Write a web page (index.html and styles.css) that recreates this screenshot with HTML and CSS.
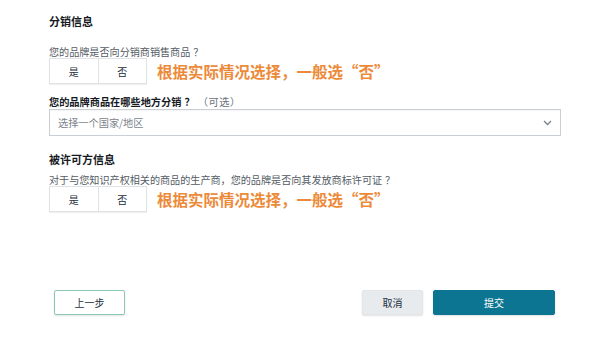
FILE: index.html
```html
<!DOCTYPE html>
<html lang="zh-CN">
<head>
<meta charset="utf-8">
<link rel="stylesheet" href="styles.css">
</head>
<body>
<div class="page">
  <section class="section">
    <h2 class="title">分销信息</h2>
    <p class="question">您的品牌是否向分销商销售商品<span class="punct">？</span></p>
    <div class="choice-row">
      <div class="toggle">
        <span class="opt">是</span>
        <span class="opt">否</span>
      </div>
      <span class="hint">根据实际情况选择，一般选“否”</span>
    </div>
    <p class="label"><b>您的品牌商品在哪些地方分销<span class="punct">？</span></b><span class="optional">（可选）</span></p>
    <div class="select">
      <span class="placeholder">选择一个国家/地区</span>
      <svg class="chev" width="9" height="6" viewBox="0 0 9 6"><path d="M1 1 L4.5 4.5 L8 1" fill="none" stroke="#79828b" stroke-width="1.3"/></svg>
    </div>
  </section>
  <section class="section second">
    <h2 class="title">被许可方信息</h2>
    <p class="question q2">对于与您知识产权相关的商品的生产商，您的品牌是否向其发放商标许可证<span class="punct">？</span></p>
    <div class="choice-row">
      <div class="toggle">
        <span class="opt">是</span>
        <span class="opt">否</span>
      </div>
      <span class="hint">根据实际情况选择，一般选“否”</span>
    </div>
  </section>
  <footer class="footer">
    <button class="btn back">上一步</button>
    <div class="actions">
      <button class="btn cancel">取消</button>
      <button class="btn submit">提交</button>
    </div>
  </footer>
</div>
</body>
</html>
```

FILE: styles.css
```css
* { box-sizing: border-box; }
html, body {
  margin: 0;
  padding: 0;
  background: #ffffff;
}
body {
  font-family: "Noto Sans CJK SC", "Noto Sans", sans-serif;
  color: #16191f;
  width: 612px;
  height: 337px;
  overflow: hidden;
}
.page {
  padding: 14px 0 0 49px;
}
.title {
  margin: 0;
  font-size: 11px;
  line-height: 14px;
  font-weight: 700;
  color: #16191f;
}
.question {
  margin: 17px 0 0 0;
  font-size: 10.1px;
  line-height: 13px;
  color: #545b64;
}
.punct {
  display: inline-block;
  padding-left: 3px;
  padding-right: 2px;
}
.q2 { margin-top: 7px; }
.choice-row {
  display: flex;
  align-items: center;
  gap: 10px;
}
.toggle {
  display: flex;
  border: 1px solid #dfe3e6;
  height: 26px;
  width: 98px;
  box-shadow: 0 1px 1px rgba(0,0,0,0.06);
}
.opt {
  flex: 1;
  display: flex;
  align-items: center;
  justify-content: center;
  font-size: 10px;
  color: #232f3e;
}
.opt + .opt { border-left: 1px solid #dfe3e6; }
.hint {
  font-size: 15.5px;
  font-weight: 700;
  color: #ec8a3a;
  line-height: 20px;
}
.label {
  margin: 11px 0 0 0;
  font-size: 10.2px;
  line-height: 14px;
  color: #16191f;
}
.label b { font-weight: 700; }
.optional { color: #687078; font-weight: 400; margin-left: 1px; letter-spacing: 0.6px; }
.select {
  width: 512px;
  height: 27px;
  border: 1px solid #c9cfd4;
  display: flex;
  align-items: center;
  justify-content: space-between;
  padding: 0 8px 0 8px;
  box-shadow: inset 0 1px 1px rgba(0,0,0,0.04);
}
.placeholder {
  font-size: 10.2px;
  color: #7b838b;
}
.second { margin-top: 16px; }
.footer {
  margin-top: 78px;
  margin-left: 5px;
  width: 501px;
  display: flex;
  justify-content: space-between;
  align-items: center;
}
.actions {
  display: flex;
  gap: 10px;
}
.btn {
  font-family: "Noto Sans CJK SC", "Noto Sans", sans-serif;
  font-size: 10px;
  height: 25px;
  border-radius: 2px;
  padding: 0;
  cursor: pointer;
}
.back {
  width: 71px;
  background: #ffffff;
  border: 1px solid #8cc7b8;
  color: #232f3e;
  box-shadow: 0 1px 2px rgba(0,0,0,0.12);
}
.cancel {
  width: 61px;
  background: #e8ebee;
  border: 1px solid #e2e6e9;
  color: #232f3e;
  box-shadow: 0 1px 2px rgba(0,0,0,0.12);
}
.submit {
  width: 122px;
  background: #0c7592;
  border: 1px solid #0c7592;
  color: #ffffff;
  box-shadow: 0 1px 2px rgba(0,0,0,0.12);
}
```
